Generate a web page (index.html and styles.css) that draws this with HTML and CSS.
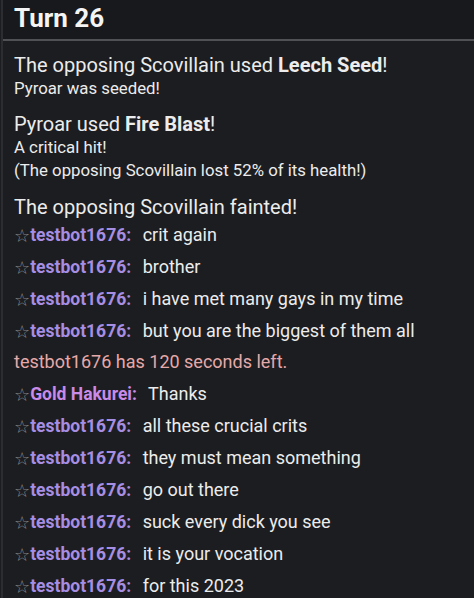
FILE: index.html
```html
<!DOCTYPE html>
<html lang="en">
<head>
<meta charset="UTF-8" />
<meta name="viewport" content="width=device-width, initial-scale=1" />
<title>Battle log</title>
<link rel="stylesheet" href="styles.css">
</head>
<body>

<div id="log">
  <h2 class="turn">Turn 26</h2>

  <div class="battle">
    <div class="big">The opposing Scovillain used <b>Leech Seed</b>!</div>
    <div class="small">Pyroar was seeded!</div>
  </div>

  <div class="battle">
    <div class="big">Pyroar used <b>Fire Blast</b>!</div>
    <div class="small">A critical hit!</div>
    <div class="small">(The opposing Scovillain lost 52% of its health!)</div>
  </div>

  <div class="battle last">
    <div class="big">The opposing Scovillain fainted!</div>
  </div>

  <div class="chat"><span class="star">☆</span><b class="user">testbot1676:</b> <span class="msg">crit again</span></div>
  <div class="chat"><span class="star">☆</span><b class="user">testbot1676:</b> <span class="msg">brother</span></div>
  <div class="chat"><span class="star">☆</span><b class="user">testbot1676:</b> <span class="msg">i have met many gays in my time</span></div>
  <div class="chat"><span class="star">☆</span><b class="user">testbot1676:</b> <span class="msg">but you are the biggest of them all</span></div>
  <div class="timer">testbot1676 has 120 seconds left.</div>
  <div class="chat"><span class="star">☆</span><b class="user gold">Gold Hakurei:</b> <span class="msg">Thanks</span></div>
  <div class="chat"><span class="star">☆</span><b class="user">testbot1676:</b> <span class="msg">all these crucial crits</span></div>
  <div class="chat"><span class="star">☆</span><b class="user">testbot1676:</b> <span class="msg">they must mean something</span></div>
  <div class="chat"><span class="star">☆</span><b class="user">testbot1676:</b> <span class="msg">go out there</span></div>
  <div class="chat"><span class="star">☆</span><b class="user">testbot1676:</b> <span class="msg">suck every dick you see</span></div>
  <div class="chat"><span class="star">☆</span><b class="user">testbot1676:</b> <span class="msg">it is your vocation</span></div>
  <div class="chat"><span class="star">☆</span><b class="user">testbot1676:</b> <span class="msg">for this 2023</span></div>
</div>

</body>
</html>
```

FILE: styles.css
```css
body {
  font-family: Roboto, "Noto Sans", sans-serif;
  background: #1c1d20;
  color: #ececec;
  margin: 0; padding: 0;
  overflow: hidden;
}
#log {
  border-left: 2px solid #2c2d31;
  margin-left: 1px;
  height: 598px;
}
.turn {
  margin: 0;
  padding: 0 0 0 11px;
  height: 39px;
  line-height: 36px;
  font-size: 26px;
  font-weight: bold;
  color: #f4f4f4;
  background: #18191c;
  border-bottom: 2px solid #505155;
}
.battle {
  padding-left: 11px;
  margin-top: 12px;
}
.battle.last {
  margin-top: 13px;
}
.battle .big {
  font-size: 20px;
  line-height: 24px;
}
.battle .small {
  font-size: 16.8px;
  line-height: 23px;
}
.chat, .timer {
  padding-left: 11px;
  height: 32px;
  line-height: 32px;
  font-size: 18px;
  white-space: nowrap;
}
.star {
  font-family: "DejaVu Sans", sans-serif;
  color: #8a8a8e;
  font-size: 18px;
  vertical-align: -1px;
}
.user {
  color: #a78ee2;
  font-size: 17.5px;
  margin-right: 7px;
}
.user.gold {
  color: #c98ae8;
}
.timer {
  color: #e6a9a9;
  height: 31px;
  line-height: 30px;
}
```
